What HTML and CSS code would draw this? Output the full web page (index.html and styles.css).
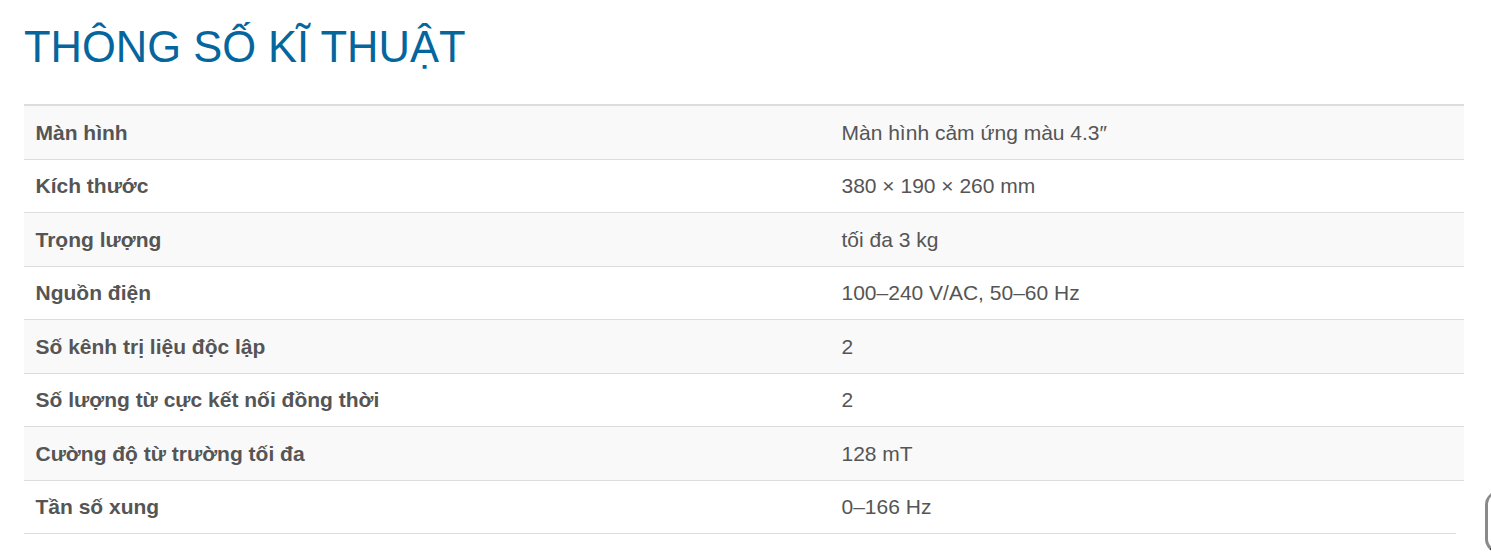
FILE: index.html
```html
<!DOCTYPE html>
<html lang="vi">
<head>
<meta charset="utf-8">
<title>Thông số kĩ thuật</title>
<link rel="stylesheet" href="styles.css">
</head>
<body>
<main class="page">
  <h1 class="title">THÔNG SỐ KĨ THUẬT</h1>
  <table class="specs">
    <tbody>
      <tr><td class="label">Màn hình</td><td class="value">Màn hình cảm ứng màu 4.3″</td></tr>
      <tr><td class="label">Kích thước</td><td class="value">380 × 190 × 260 mm</td></tr>
      <tr><td class="label">Trọng lượng</td><td class="value">tối đa 3 kg</td></tr>
      <tr><td class="label">Nguồn điện</td><td class="value">100–240 V/AC, 50–60 Hz</td></tr>
      <tr><td class="label">Số kênh trị liệu độc lập</td><td class="value">2</td></tr>
      <tr><td class="label">Số lượng từ cực kết nối đồng thời</td><td class="value">2</td></tr>
      <tr><td class="label">Cường độ từ trường tối đa</td><td class="value">128 mT</td></tr>
      <tr><td class="label">Tần số xung</td><td class="value">0–166 Hz</td></tr>
    </tbody>
  </table>
  <div class="table-end"></div>
</main>
<div class="edge-widget"></div>
</body>
</html>
```

FILE: styles.css
```css
html, body {
  margin: 0;
  padding: 0;
  background: #ffffff;
  overflow: hidden;
}

body {
  font-family: "Liberation Sans", Arial, sans-serif;
  color: #555555;
}

.page {
  padding: 20px 27px 0 24px;
}

.title {
  margin: 0 0 31px 0;
  padding-top: 1px;
  font-size: 43.5px;
  font-weight: 400;
  line-height: 52px;
  color: #05669e;
}

.specs {
  width: 100%;
  border-collapse: collapse;
  border-top: 2px solid #dddddd;
  font-size: 21px;
  line-height: 1.5;
}

.specs td {
  padding: 10.5px;
  border-top: 1px solid #dddddd;
  vertical-align: top;
}

.specs tr:first-child td {
  border-top: 0;
}

.specs tr:nth-child(odd) td {
  background: #f9f9f9;
}

.label {
  width: 785px;
  padding-left: 11.5px !important;
  font-weight: 700;
}

.value {
  font-weight: 400;
}

.table-end {
  height: 1px;
  margin-right: 8px;
  background: #dddddd;
}

.edge-widget {
  position: fixed;
  left: 1485px;
  top: 491px;
  width: 50px;
  height: 62px;
  border-left: 3px solid #8a8a8a;
  border-top: 2px solid #555555;
  border-bottom: 3px solid #444444;
  border-radius: 14px 0 0 14px;
  box-sizing: border-box;
}
```
